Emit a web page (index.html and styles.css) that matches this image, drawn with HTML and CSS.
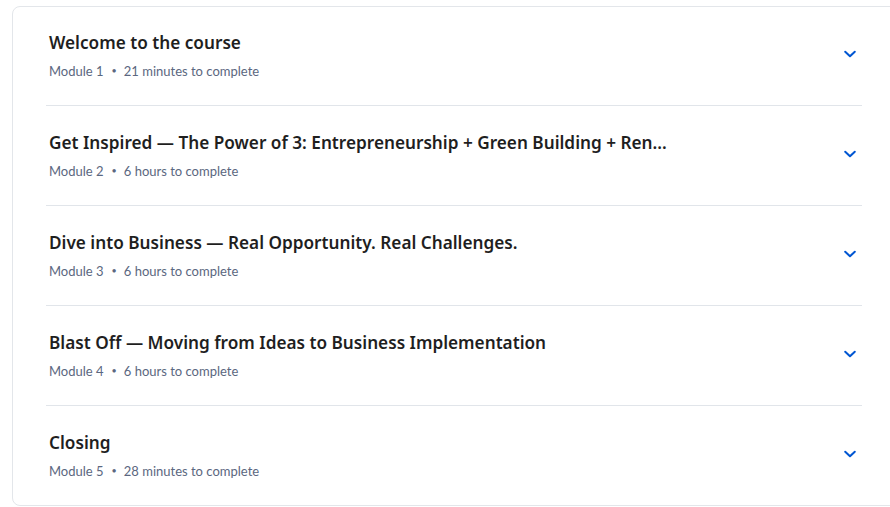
FILE: index.html
```html
<!DOCTYPE html>
<html lang="en">
<head>
<meta charset="utf-8">
<link rel="stylesheet" href="styles.css">
</head>
<body>
<div class="card">
  <div class="modules">
    <div class="row">
      <div class="text">
        <div class="title">Welcome to the course</div>
        <div class="meta"><span>Module 1</span><span class="dot">•</span><span>21 minutes to complete</span></div>
      </div>
      <svg class="chev" viewBox="0 0 16 16"><path d="M3.2 5.7 L8 10.3 L12.8 5.7" /></svg>
    </div>
    <div class="row">
      <div class="text">
        <div class="title">Get Inspired — The Power of 3: Entrepreneurship + Green Building + Ren…</div>
        <div class="meta"><span>Module 2</span><span class="dot">•</span><span>6 hours to complete</span></div>
      </div>
      <svg class="chev" viewBox="0 0 16 16"><path d="M3.2 5.7 L8 10.3 L12.8 5.7" /></svg>
    </div>
    <div class="row">
      <div class="text">
        <div class="title">Dive into Business — Real Opportunity. Real Challenges.</div>
        <div class="meta"><span>Module 3</span><span class="dot">•</span><span>6 hours to complete</span></div>
      </div>
      <svg class="chev" viewBox="0 0 16 16"><path d="M3.2 5.7 L8 10.3 L12.8 5.7" /></svg>
    </div>
    <div class="row">
      <div class="text">
        <div class="title">Blast Off — Moving from Ideas to Business Implementation</div>
        <div class="meta"><span>Module 4</span><span class="dot">•</span><span>6 hours to complete</span></div>
      </div>
      <svg class="chev" viewBox="0 0 16 16"><path d="M3.2 5.7 L8 10.3 L12.8 5.7" /></svg>
    </div>
    <div class="row">
      <div class="text">
        <div class="title">Closing</div>
        <div class="meta"><span>Module 5</span><span class="dot">•</span><span>28 minutes to complete</span></div>
      </div>
      <svg class="chev" viewBox="0 0 16 16"><path d="M3.2 5.7 L8 10.3 L12.8 5.7" /></svg>
    </div>
  </div>
</div>
</body>
</html>
```
FILE: styles.css
```css
html, body {
  margin: 0;
  padding: 0;
  background: #ffffff;
  overflow: hidden;
}
body {
  font-family: Lato, "Liberation Sans", sans-serif;
  padding: 6px 0 0 12px;
}
.card {
  width: 900px;
  border: 1px solid #e3e6ea;
  border-radius: 8px;
  box-sizing: border-box;
  padding: 0 0 0 33px;
}
.modules {
  width: 816px;
}
.row {
  display: flex;
  align-items: center;
  justify-content: space-between;
  padding: 25px 4px 24px 3px;
  border-bottom: 1px solid #e1e5ea;
}
.row:first-child {
  padding-top: 24px;
}
.row:last-child {
  border-bottom: none;
}
.text {
  display: flex;
  flex-direction: column;
  gap: 6px;
}
.title {
  font-family: "Noto Sans", Lato, sans-serif;
  font-size: 17.2px;
  font-weight: 600;
  line-height: 24px;
  color: #1f1f1f;
}
.meta {
  font-size: 13px;
  line-height: 20px;
  color: #5b6780;
  display: flex;
  align-items: center;
}
.dot {
  font-size: 9px;
  margin: 0 7px 0 8px;
}
.chev {
  width: 16px;
  height: 16px;
  flex: none;
  margin-top: -4px;
}
.chev path {
  fill: none;
  stroke: #0056d2;
  stroke-width: 2;
  stroke-linecap: round;
  stroke-linejoin: round;
}
```
